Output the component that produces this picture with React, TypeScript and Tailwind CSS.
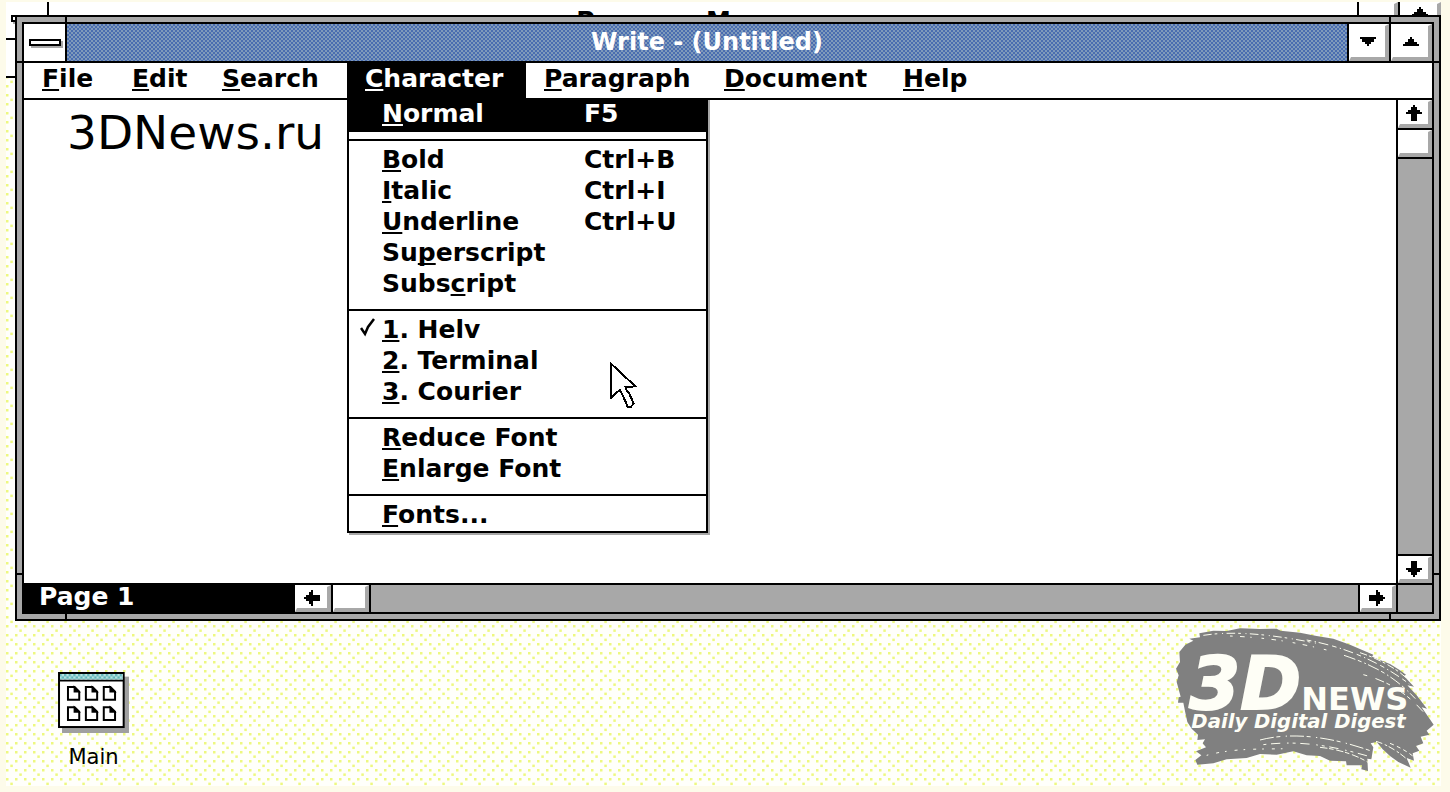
import type { ReactNode } from "react";

type Dir = "up" | "down" | "left" | "right";

interface MenuEntry {
  label: string;
  hot: number;
  keys?: string;
  checked?: boolean;
  active?: boolean;
}

const menuBar = [
  { label: "File", width: "w-[90px]" },
  { label: "Edit", width: "w-[90px]" },
  { label: "Search", width: "w-[143px]" },
  { label: "Character", width: "w-[179px]", open: true },
  { label: "Paragraph", width: "w-[180px]" },
  { label: "Document", width: "w-[179px]" },
  { label: "Help", width: "w-[100px]" },
];

const groups: MenuEntry[][] = [
  [{ label: "Normal", hot: 0, keys: "F5", active: true }],
  [
    { label: "Bold", hot: 0, keys: "Ctrl+B" },
    { label: "Italic", hot: 0, keys: "Ctrl+I" },
    { label: "Underline", hot: 0, keys: "Ctrl+U" },
    { label: "Superscript", hot: 2 },
    { label: "Subscript", hot: 4 },
  ],
  [
    { label: "1. Helv", hot: 0, checked: true },
    { label: "2. Terminal", hot: 0 },
    { label: "3. Courier", hot: 0 },
  ],
  [
    { label: "Reduce Font", hot: 0 },
    { label: "Enlarge Font", hot: 0 },
  ],
  [{ label: "Fonts...", hot: 0 }],
];

const HotLabel = ({ label, hot }: { label: string; hot: number }) => (
  <span className="whitespace-pre">
    {label.slice(0, hot)}
    <span className="underline decoration-2 underline-offset-2 [text-decoration-skip-ink:none]">
      {label[hot]}
    </span>
    {label.slice(hot + 1)}
  </span>
);

const Triangle = ({ down = false }: { down?: boolean }) => (
  <svg viewBox="0 0 7 4" className="w-4 h-[9px]" shapeRendering="crispEdges">
    <path
      d={
        down
          ? "M0 0h7v1h-1v1h-1v1h-1v1h-1v-1h-1v-1h-1v-1h-1z"
          : "M0 4h7v-1h-1v-1h-1v-1h-1v-1h-1v1h-1v1h-1v1h-1z"
      }
    />
  </svg>
);

const arrowPaths: Record<Dir, string> = {
  up: "M3 0h1v1h1v1h1v1h1v1h-2v3h-3v-3h-2v-1h1v-1h1v-1h1z",
  down: "M3 7h1v-1h1v-1h1v-1h1v-1h-2v-3h-3v3h-2v1h1v1h1v1h1z",
  left: "M0 3v1h1v1h1v1h1v1h1v-2h3v-3h-3v-2h-1v1h-1v1h-1v1z",
  right: "M7 3v1h-1v1h-1v1h-1v1h-1v-2h-3v-3h3v-2h1v1h1v1h1v1z",
};

const Arrow = ({ dir }: { dir: Dir }) => (
  <svg viewBox="0 0 7 7" className="w-4 h-4" shapeRendering="crispEdges">
    <path d={arrowPaths[dir]} />
  </svg>
);

const Bevel = ({ name, size, children }: { name: string; size: string; children?: ReactNode }) => (
  <button
    aria-label={name}
    className={`${size} shrink-0 flex items-center justify-center bg-white border-2 border-r-4 border-b-4 border-t-white border-l-white border-r-[#a8a8a8] border-b-[#a8a8a8]`}
  >
    {children}
  </button>
);

const ControlBox = () => (
  <button
    aria-label="Control menu"
    className="w-[41px] shrink-0 flex items-center justify-center bg-white"
  >
    <span className="w-8 h-[7px] bg-white border-2 border-black shadow-[2px_2px_0_#a8a8a8]" />
  </button>
);

const Dots = () => (
  <svg className="absolute inset-0 w-full h-full" aria-hidden="true">
    <defs>
      <pattern id="dots" width="18" height="18" patternUnits="userSpaceOnUse">
        <g fill="#edf880">
          <rect x="0" y="2" width="2.5" height="2.5" />
          <rect x="9" y="2" width="2.5" height="2.5" />
          <rect x="4.3" y="6.6" width="2.5" height="2.5" />
          <rect x="0" y="11" width="2.5" height="2.5" />
          <rect x="9" y="11" width="2.5" height="2.5" />
          <rect x="13.3" y="15.4" width="2.5" height="2.5" />
        </g>
      </pattern>
    </defs>
    <rect width="100%" height="100%" fill="url(#dots)" />
  </svg>
);

// only the top edge of this one shows behind Write
const ProgramManager = () => (
  <div className="absolute inset-x-0 top-0 bg-white">
    <div className="flex h-[38px] border-b-2 border-black">
      <div className="flex pb-1">
        <ControlBox />
      </div>
      <div className="flex-1 border-x-2 border-black text-center leading-[38px] overflow-hidden">
        Program Manager
      </div>
      <Bevel name="Minimize Program Manager" size="w-[39px]" />
      <div className="w-0.5 bg-black" />
      <Bevel name="Restore Program Manager" size="w-[41px] flex-col gap-0.5 pb-1">
        <Triangle />
        <Triangle down />
      </Bevel>
    </div>
    <div className="h-[38px] border-b-2 border-black" />
  </div>
);

const Pointer = () => (
  <svg
    viewBox="806 187 84 138"
    className="absolute left-[260px] top-[264px] w-7 h-[46px]"
    shapeRendering="crispEdges"
    aria-hidden="true"
  >
    <path
      d="M811 191L885 260L856 262L859 272L868 284L880 312L872 321L862 321L846 284L838 271L811 295Z"
      fill="#fff"
      stroke="#000"
      strokeWidth="6"
    />
  </svg>
);

const CharacterMenu = () => (
  <div
    role="menu"
    className="absolute left-0 top-full z-10 w-[361px] bg-white text-black border-2 border-t-0 border-black shadow-[2px_2px_0_#a8a8a8]"
  >
    {groups.map((group, i) => (
      <div
        key={i}
        className={
          i === 0
            ? "pb-[7px]"
            : i === groups.length - 1
              ? "border-t-2 border-black pt-[3px] pb-px"
              : "border-t-2 border-black pt-[3px] pb-[10px]"
        }
      >
        {group.map((item) => (
          <button
            key={item.label}
            role="menuitem"
            className={`grid w-full grid-cols-[33px_202px_1fr] text-left leading-[31px] ${item.active ? "bg-black text-white pb-[3px]" : ""}`}
          >
            <span>
              {item.checked && (
                <svg viewBox="0 0 16 20" className="ml-[11px] mt-[3px] w-4 h-5">
                  <path d="M1 11L5 17L8 10L14 2" fill="none" stroke="#000" strokeWidth="2.5" />
                </svg>
              )}
            </span>
            <HotLabel label={item.label} hot={item.hot} />
            <span>{item.keys}</span>
          </button>
        ))}
      </div>
    ))}
    <Pointer />
  </div>
);

// short black ticks that mark the resize corners of the frame
const FrameTicks = () => (
  <div aria-hidden="true">
    <i className="absolute bg-black w-0.5 h-[5px] left-12 top-0" />
    <i className="absolute bg-black w-0.5 h-[5px] right-12 top-0" />
    <i className="absolute bg-black w-0.5 h-[5px] left-12 bottom-0" />
    <i className="absolute bg-black w-0.5 h-[5px] right-12 bottom-0" />
    <i className="absolute bg-black h-0.5 w-[5px] left-0 top-11" />
    <i className="absolute bg-black h-0.5 w-[5px] right-0 top-11" />
    <i className="absolute bg-black h-0.5 w-[5px] left-0 bottom-11" />
    <i className="absolute bg-black h-0.5 w-[5px] right-0 bottom-11" />
  </div>
);

const WriteWindow = () => (
  <main className="relative flex-1 flex flex-col ml-[9px] mt-[13px] p-[5px] bg-[#a8a8a8] border-2 border-black">
    <FrameTicks />
    <div className="flex-1 flex flex-col border-2 border-black">
      <header className="flex h-[39px] border-b-2 border-black">
        <ControlBox />
        <h1 className="flex-1 border-x-2 border-black text-center text-2xl leading-9 text-white bg-[conic-gradient(#4a6db0_25%,#7f9abb_0_50%,#4a6db0_0_75%,#7f9abb_0)] bg-[length:4px_4px]">
          Write - (Untitled)
        </h1>
        <Bevel name="Minimize" size="w-10">
          <Triangle down />
        </Bevel>
        <div className="w-0.5 bg-black" />
        <Bevel name="Maximize" size="w-[41px]">
          <Triangle />
        </Bevel>
      </header>

      <nav className="flex bg-white border-b-2 border-black">
        {menuBar.map((item) => (
          <div key={item.label} className={`relative ${item.width}`}>
            <button
              className={`block w-full pl-[18px] pb-1 text-left leading-[31px] ${item.open ? "bg-black text-white" : ""}`}
            >
              <HotLabel label={item.label} hot={0} />
            </button>
            {item.open && <CharacterMenu />}
          </div>
        ))}
      </nav>

      <div className="flex-1 flex">
        <textarea
          aria-label="Document text"
          defaultValue="3DNews.ru"
          spellCheck={false}
          className="flex-1 resize-none bg-white pl-[43px] pt-[7px] text-[47px] leading-[52px] font-normal outline-none"
        />
        <div className="flex flex-col w-9 border-l-2 border-black">
          <Bevel name="Scroll up" size="h-7">
            <Arrow dir="up" />
          </Bevel>
          <div className="h-0.5 bg-black" />
          <Bevel name="Vertical scroll thumb" size="h-[27px]" />
          <div className="flex-1 border-y-2 border-black" />
          <Bevel name="Scroll down" size="h-[27px]">
            <Arrow dir="down" />
          </Bevel>
        </div>
      </div>

      <footer className="flex h-[29px] border-t-2 border-black">
        <div className="w-[271px] pl-[15px] bg-black text-white leading-6">Page 1</div>
        <Bevel name="Scroll left" size="w-9">
          <Arrow dir="left" />
        </Bevel>
        <div className="w-0.5 bg-black" />
        <Bevel name="Horizontal scroll thumb" size="w-9" />
        <div className="flex-1 border-x-2 border-black" />
        <Bevel name="Scroll right" size="w-9">
          <Arrow dir="right" />
        </Bevel>
        <div className="w-9 border-l-2 border-black" />
      </footer>
    </div>
  </main>
);

const MainIcon = () => (
  <button className="flex flex-col items-center gap-[10px] text-[21px] leading-7 font-normal">
    <svg viewBox="24 22 214 184" className="w-[71px] h-[61px]" aria-hidden="true">
      <defs>
        <pattern id="strip" width="14" height="14" patternUnits="userSpaceOnUse">
          <rect width="14" height="14" fill="#b9e3e0" />
          <rect width="7" height="7" fill="#5fb5ba" />
          <rect x="7" y="7" width="7" height="7" fill="#5fb5ba" />
        </pattern>
      </defs>
      <rect x="36" y="36" width="202" height="170" fill="#a0a0a0" />
      <rect x="27" y="25" width="195" height="163" fill="#fff" stroke="#000" strokeWidth="6" />
      <rect x="30" y="28" width="189" height="17" fill="url(#strip)" />
      <path d="M27 48H222" stroke="#000" strokeWidth="6" />
      {[67, 128].map((y) =>
        [54, 108, 162].map((x) => (
          <g key={`${x}-${y}`} transform={`translate(${x} ${y})`}>
            <path d="M0 0H20L34 14V39H0Z" fill="#fff" stroke="#000" strokeWidth="6" />
            <path d="M19 0V15H34Z" stroke="#000" strokeWidth="4" />
          </g>
        )),
      )}
    </svg>
    Main
  </button>
);

const Logo = () => (
  <svg
    viewBox="45 35 780 435"
    className="w-[260px] h-[145px]"
    role="img"
    aria-label="3DNews Daily Digital Digest"
  >
    <path
      fill="#808080"
      d="M118 54L160 46L200 47L240 39L300 41L350 40L362 46L420 52L470 62L520 70L570 88L605 103L640 118L636 124L690 146L720 165L738 178L732 182L762 214L742 210L770 240L801 280L785 276L821 328L800 346L808 358L782 364L790 384L768 392L778 406L758 414L762 436L740 428L752 457L715 440L690 422L668 402L650 380L632 384L640 396L634 432L622 430L624 467L604 462L606 450L560 450L558 438L510 436L480 422L440 420L400 408L350 418L300 416L260 428L200 432L160 444L112 448L106 434L124 420L108 408L138 396L128 384L135 372L112 374L114 358L95 340L82 320L76 292L70 262L54 262L56 246L62 244L50 200L56 180L48 160L60 140L58 110L76 88L100 76L88 70L120 66Z"
    />
    <g fill="none" stroke="#fdfef0" strokeWidth="3">
      <path d="M130 60C220 46 330 56 470 84" strokeDasharray="26 9 8 14 3 10" />
      <path d="M210 62C300 66 380 74 500 104" strokeDasharray="8 22 14 17 4 30" />
      <path d="M440 74C560 96 660 140 748 206" strokeDasharray="14 10 4 8 30 12" />
      <path d="M552 120C640 150 700 180 766 250" strokeDasharray="36 8 12 9 5 7" />
      <path d="M600 112C660 132 710 160 744 192" strokeDasharray="22 6 9 8" />
      <path d="M610 178C680 196 740 232 792 292" strokeDasharray="12 26 28 8" />
      <path d="M300 374C400 348 520 366 636 408" strokeDasharray="42 8 12 16 4 9" />
      <path d="M310 388C420 374 520 392 630 424" strokeDasharray="9 14 28 20 5 12" />
      <path d="M480 396C540 402 590 420 626 442" strokeDasharray="22 5 14 8" />
      <path d="M140 420C220 398 300 402 380 400" strokeDasharray="5 24 9 18" />
      <path d="M648 378C690 390 730 420 752 442" strokeDasharray="20 8 8 5" />
      <path d="M690 384C720 396 745 410 768 430" strokeDasharray="12 10" />
    </g>
    <g fill="#fefef6" fontFamily="DejaVu Sans, sans-serif" fontWeight="bold">
      <text
        x="88"
        y="281"
        fontSize="220"
        fontStyle="italic"
        stroke="#fefef6"
        strokeWidth="6"
      >
        3D
      </text>
      <text x="424" y="283" fontSize="96">
        NEWS
      </text>
      <text x="94" y="337" fontSize="59" fontStyle="italic">
        Daily Digital Digest
      </text>
    </g>
  </svg>
);

export default function App() {
  return (
    <div className="min-h-screen flex flex-col bg-[#fdfbea] pt-0.5 pl-1.5 pr-[9px] pb-1.5 font-['DejaVu_Sans',sans-serif] text-[25px] font-bold text-black">
      <div className="relative flex-1 flex flex-col bg-[#fffffb]">
        <Dots />
        <ProgramManager />
        <WriteWindow />
        <div className="relative flex items-start justify-between pl-[52px] pr-1.5">
          <div className="pt-[51px] pb-[15px]">
            <MainIcon />
          </div>
          <div className="pt-1.5">
            <Logo />
          </div>
        </div>
      </div>
    </div>
  );
}
